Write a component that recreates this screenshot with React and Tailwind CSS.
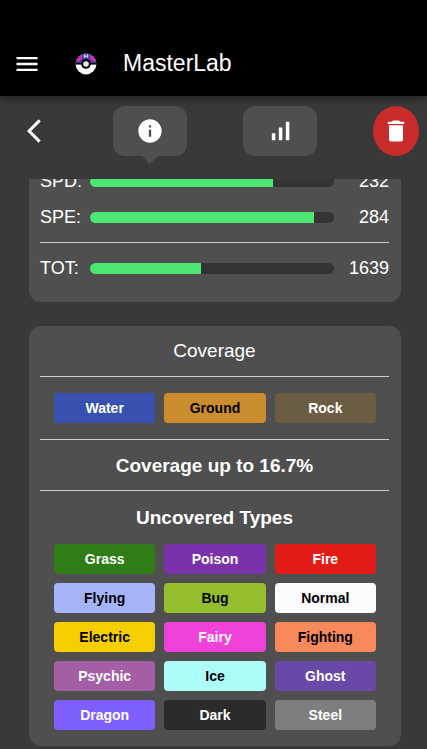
import React from 'react';
import {
  MdArrowBackIosNew,
  MdDelete,
  MdInfo,
  MdMenu,
  MdSignalCellularAlt,
} from 'react-icons/md';

const coveredTypes = [
  { name: 'Water', style: 'bg-[#3850b0] text-white' },
  { name: 'Ground', style: 'bg-[#ca8c2c] text-black' },
  { name: 'Rock', style: 'bg-[#6b5d43] text-white' },
];

const uncoveredTypes = [
  { name: 'Grass', style: 'bg-[#307d18] text-white' },
  { name: 'Poison', style: 'bg-[#7a32aa] text-white' },
  { name: 'Fire', style: 'bg-[#e41c17] text-white' },
  { name: 'Flying', style: 'bg-[#a5b4f9] text-black' },
  { name: 'Bug', style: 'bg-[#94be2b] text-black' },
  { name: 'Normal', style: 'bg-[#fcfbfe] text-black' },
  { name: 'Electric', style: 'bg-[#f7cf00] text-black' },
  { name: 'Fairy', style: 'bg-[#f041d8] text-white' },
  { name: 'Fighting', style: 'bg-[#f7895b] text-black' },
  { name: 'Psychic', style: 'bg-[#a45ea6] text-white' },
  { name: 'Ice', style: 'bg-[#acfcf8] text-black' },
  { name: 'Ghost', style: 'bg-[#6849a8] text-white' },
  { name: 'Dragon', style: 'bg-[#7f60ff] text-white' },
  { name: 'Dark', style: 'bg-[#2b2b2b] text-white' },
  { name: 'Steel', style: 'bg-[#7e7e80] text-white' },
];

function MasterBall() {
  return (
    <svg viewBox="0 0 22 22" className="size-[22px]" aria-hidden="true">
      <defs>
        <clipPath id="ball">
          <circle cx="11" cy="11" r="10.4" />
        </clipPath>
      </defs>
      <g clipPath="url(#ball)">
        <rect width="22" height="22" fill="#fff" />
        <rect width="22" height="10.5" fill="#45399f" />
        <ellipse cx="4.4" cy="5.2" rx="2" ry="3.4" fill="#d92fa6" transform="rotate(38 4.4 5.2)" />
        <ellipse cx="17.6" cy="5.2" rx="2" ry="3.4" fill="#d92fa6" transform="rotate(-38 17.6 5.2)" />
        <path d="M9.3 5V2l1.7 1.8L12.7 2v3" fill="none" stroke="#cfc9f2" strokeWidth="1.1" />
        <rect y="10" width="22" height="1.6" fill="#000" />
        <circle cx="11" cy="11" r="4.8" fill="#000" />
      </g>
      <circle cx="11" cy="11" r="2.8" fill="#e9e9e9" />
    </svg>
  );
}

function StatRow({ label, value, percent }) {
  return (
    <div className="flex h-9 items-center">
      <span className="w-[50px]">{label}:</span>
      <div className="h-[11px] flex-1 overflow-hidden rounded-full bg-[#343434]">
        <div className="h-full bg-[#4de673]" style={{ width: `${percent}%` }} />
      </div>
      <span className="w-[55px] text-right">{value}</span>
    </div>
  );
}

function Divider({ className }) {
  return <hr className={`h-px border-0 bg-[#cfcfcf] ${className}`} />;
}

function TypeGrid({ types }) {
  return (
    <ul className="grid grid-cols-3 gap-[9px] pr-[13px] pl-[14px]">
      {types.map((type) => (
        <li
          key={type.name}
          className={`rounded-[4px] text-center text-sm leading-[30px] font-bold ${type.style}`}
        >
          {type.name}
        </li>
      ))}
    </ul>
  );
}

export default function App() {
  return (
    <div className="flex h-screen flex-col overflow-hidden bg-[#393939] font-['Liberation_Sans',Arial,sans-serif] text-lg text-white">
      <header className="z-10 flex h-24 shrink-0 items-center bg-black pt-8 pl-[13px] shadow-[0_2px_8px_rgba(0,0,0,0.5)]">
        <button type="button" aria-label="Open menu">
          <MdMenu className="size-7" />
        </button>
        <a href="#home" aria-label="Home" className="ml-[34px]">
          <MasterBall />
        </a>
        <h1 className="ml-[26px] text-[23px]">MasterLab</h1>
      </header>

      <nav className="flex h-[83px] shrink-0 items-start justify-between pt-[10px] pr-2 pl-[11px]">
        <button type="button" aria-label="Back" className="flex h-[50px] w-[46px] items-center justify-center">
          <MdArrowBackIosNew className="size-7" />
        </button>
        <button
          type="button"
          aria-label="Info"
          className="relative flex h-[50px] w-[74px] items-center justify-center rounded-xl bg-[#4f4f4f]"
        >
          <MdInfo className="size-7" />
          <span className="absolute top-full left-1/2 -translate-x-1/2 border-x-8 border-t-8 border-x-transparent border-t-[#4f4f4f]" />
        </button>
        <button
          type="button"
          aria-label="Statistics"
          className="flex h-[50px] w-[74px] items-center justify-center rounded-xl bg-[#4f4f4f]"
        >
          <MdSignalCellularAlt className="size-7" />
        </button>
        <button
          type="button"
          aria-label="Delete"
          className="flex h-[50px] w-[46px] items-center justify-center rounded-[50%] bg-[#ca2b2b]"
        >
          <MdDelete className="size-7" />
        </button>
      </nav>

      <main className="min-h-0 flex-1 overflow-hidden pr-[26px] pl-[29px]">
        <section className="-mt-4 rounded-xl bg-[#4f4f4f] pr-3 pb-4 pl-[11px]">
          <StatRow label="SPD" value={232} percent={75} />
          <StatRow label="SPE" value={284} percent={92} />
          <Divider className="my-[7px]" />
          <StatRow label="TOT" value={1639} percent={45.5} />
        </section>

        <section className="mt-6 rounded-xl bg-[#4f4f4f] pt-3 pr-3 pb-4 pl-[11px]">
          <h2 className="text-center text-[19px] leading-[26px]">Coverage</h2>
          <Divider className="mt-3 mb-4" />
          <TypeGrid types={coveredTypes} />
          <Divider className="mt-4 mb-[13px]" />
          <p className="text-center text-[19px] leading-[26px] font-bold">Coverage up to 16.7%</p>
          <Divider className="mt-[11px] mb-[14px]" />
          <h3 className="mb-[13px] text-center text-[19px] leading-[26px] font-bold">Uncovered Types</h3>
          <TypeGrid types={uncoveredTypes} />
        </section>
      </main>
    </div>
  );
}
